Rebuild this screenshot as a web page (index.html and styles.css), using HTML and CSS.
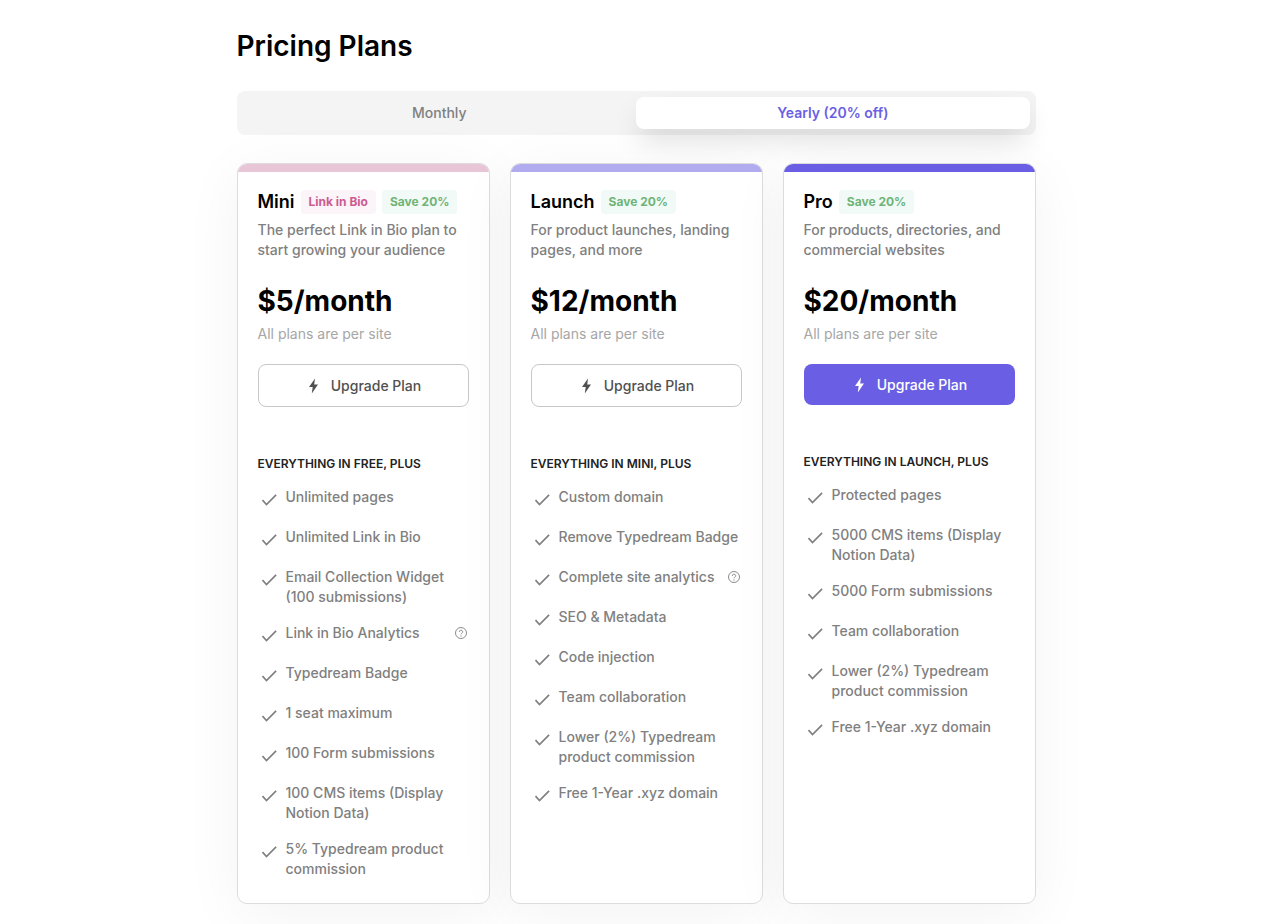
FILE: index.html
```html
<!DOCTYPE html>
<html lang="en">
<head>
  <meta charset="UTF-8" />
  <meta name="viewport" content="width=device-width, initial-scale=1.0" />
  <title>Pricing Plans</title>
  <link rel="stylesheet" href="styles.css">
</head>
<body>

  <!-- shared icons -->
  <svg class="sprite" aria-hidden="true">
    <symbol id="check" viewBox="0 0 24 24">
      <path d="M4.5 13.2l4 4.3L18.100 7.800" fill="none" stroke="currentColor" stroke-width="1.7" />
    </symbol>
    <symbol id="bolt" viewBox="0 0 16 16">
      <path d="M10 0.400L4 9h3.700l-0.900 6.600L13 6.600H9.200z" fill="currentColor" />
    </symbol>
    <symbol id="help" viewBox="0 0 14 14">
      <circle cx="7" cy="7" r="5.5" fill="none" stroke="currentColor" />
      <path d="M5.3 5.9a1.7 1.6 0 1 1 2.5 1.3c-.6.3-.8.5-.8 1.1" fill="none" stroke="currentColor" />
      <circle cx="7" cy="9.9" r=".6" fill="currentColor" />
    </symbol>
  </svg>

  <main class="container">
    <h1 class="title">Pricing Plans</h1>

    <div class="toggle">
      <button class="toggle-btn" type="button">Monthly</button>
      <button class="toggle-btn active" type="button">Yearly (20% off)</button>
    </div>

    <div class="plans">

      <section class="card mini">
        <div class="plan-head">
          <h2 class="plan-name">Mini</h2>
          <span class="badge pink">Link in Bio</span>
          <span class="badge green">Save 20%</span>
        </div>
        <p class="desc">The perfect Link in Bio plan to start growing your audience</p>
        <div class="price">$5/month</div>
        <p class="note">All plans are per site</p>
        <button class="upgrade" type="button"><svg class="bolt"><use href="#bolt" /></svg>Upgrade Plan</button>
        <h3 class="plus">EVERYTHING IN FREE, PLUS</h3>
        <ul class="features">
          <li><svg class="check"><use href="#check" /></svg><span>Unlimited pages</span></li>
          <li><svg class="check"><use href="#check" /></svg><span>Unlimited Link in Bio</span></li>
          <li><svg class="check"><use href="#check" /></svg><span>Email Collection Widget (100 submissions)</span></li>
          <li><svg class="check"><use href="#check" /></svg><span>Link in Bio Analytics</span><button class="help" type="button" aria-label="About Link in Bio Analytics"><svg><use href="#help" /></svg></button></li>
          <li><svg class="check"><use href="#check" /></svg><span>Typedream Badge</span></li>
          <li><svg class="check"><use href="#check" /></svg><span>1 seat maximum</span></li>
          <li><svg class="check"><use href="#check" /></svg><span>100 Form submissions</span></li>
          <li><svg class="check"><use href="#check" /></svg><span>100 CMS items (Display Notion Data)</span></li>
          <li><svg class="check"><use href="#check" /></svg><span>5% Typedream product commission</span></li>
        </ul>
      </section>

      <section class="card launch">
        <div class="plan-head">
          <h2 class="plan-name">Launch</h2>
          <span class="badge green">Save 20%</span>
        </div>
        <p class="desc">For product launches, landing pages, and more</p>
        <div class="price">$12/month</div>
        <p class="note">All plans are per site</p>
        <button class="upgrade" type="button"><svg class="bolt"><use href="#bolt" /></svg>Upgrade Plan</button>
        <h3 class="plus">EVERYTHING IN MINI, PLUS</h3>
        <ul class="features">
          <li><svg class="check"><use href="#check" /></svg><span>Custom domain</span></li>
          <li><svg class="check"><use href="#check" /></svg><span>Remove Typedream Badge</span></li>
          <li><svg class="check"><use href="#check" /></svg><span>Complete site analytics</span><button class="help" type="button" aria-label="About site analytics"><svg><use href="#help" /></svg></button></li>
          <li><svg class="check"><use href="#check" /></svg><span>SEO &amp; Metadata</span></li>
          <li><svg class="check"><use href="#check" /></svg><span>Code injection</span></li>
          <li><svg class="check"><use href="#check" /></svg><span>Team collaboration</span></li>
          <li><svg class="check"><use href="#check" /></svg><span>Lower (2%) Typedream product commission</span></li>
          <li><svg class="check"><use href="#check" /></svg><span>Free 1-Year .xyz domain</span></li>
        </ul>
      </section>

      <section class="card pro">
        <div class="plan-head">
          <h2 class="plan-name">Pro</h2>
          <span class="badge green">Save 20%</span>
        </div>
        <p class="desc">For products, directories, and commercial websites</p>
        <div class="price">$20/month</div>
        <p class="note">All plans are per site</p>
        <button class="upgrade primary" type="button"><svg class="bolt"><use href="#bolt" /></svg>Upgrade Plan</button>
        <h3 class="plus">EVERYTHING IN LAUNCH, PLUS</h3>
        <ul class="features">
          <li><svg class="check"><use href="#check" /></svg><span>Protected pages</span></li>
          <li><svg class="check"><use href="#check" /></svg><span>5000 CMS items (Display Notion Data)</span></li>
          <li><svg class="check"><use href="#check" /></svg><span>5000 Form submissions</span></li>
          <li><svg class="check"><use href="#check" /></svg><span>Team collaboration</span></li>
          <li><svg class="check"><use href="#check" /></svg><span>Lower (2%) Typedream product commission</span></li>
          <li><svg class="check"><use href="#check" /></svg><span>Free 1-Year .xyz domain</span></li>
        </ul>
      </section>

    </div>
  </main>

</body>
</html>
```
FILE: styles.css
```css
* {
  box-sizing: border-box;
}

body {
  margin: 0;
  font-family: Inter, "Liberation Sans", sans-serif;
  font-size: 14px;
  line-height: 20px;
  background: #fff;
  color: #000;
}

h1, h2, h3, p, ul {
  margin: 0;
  padding: 0;
}

button {
  font: inherit;
  cursor: pointer;
}

.sprite {
  position: absolute;
  width: 0;
  height: 0;
}

.container {
  max-width: 799px;
  margin: 0 auto;
  padding: 28px 0 20px;
}

.title {
  font-size: 28px;
  line-height: 36px;
  font-weight: 600;
}

/* billing toggle */
.toggle {
  display: flex;
  margin-top: 27px;
  padding: 6px;
  border-radius: 8px;
  background: #f4f4f4;
}

.toggle-btn {
  flex: 1;
  height: 32px;
  padding: 0;
  border: none;
  border-radius: 8px;
  background: none;
  color: #808080;
  font-weight: 500;
}

.toggle-btn.active {
  background: #fff;
  color: #6a5fe4;
  font-weight: 600;
  box-shadow: 0 14px 28px -4px rgba(0, 0, 0, 0.14);
}

/* plan cards */
.plans {
  display: grid;
  grid-template-columns: repeat(3, 1fr);
  gap: 20px;
  margin-top: 28px;
}

.card {
  position: relative;
  overflow: hidden;
  padding: 26px 20px 24px;
  border: 1px solid #dcdcdc;
  border-radius: 10px;
  background: #fff;
  box-shadow: 0 10px 60px rgba(0, 0, 0, 0.05);
}

/* coloured strip along the top */
.card::before {
  content: "";
  position: absolute;
  top: 0;
  left: 0;
  right: 0;
  height: 8px;
}

.mini::before { background: #e9c5d8; }
.launch::before { background: #b1acef; }
.pro::before { background: #6a5fe4; }

.plan-head {
  display: flex;
  align-items: center;
  gap: 6px;
  height: 24px;
}

.plan-name {
  font-size: 18px;
  line-height: 24px;
  font-weight: 600;
}

.badge {
  padding: 0 8px;
  border-radius: 4px;
  font-size: 12px;
  line-height: 24px;
  font-weight: 700;
  white-space: nowrap;
}

.badge.pink {
  background: #fbf4f8;
  color: #cd5c92;
}

.badge.green {
  background: #f1faf7;
  color: #6fb476;
}

.desc {
  margin-top: 6px;
  color: #808080;
  font-weight: 500;
}

.price {
  margin-top: 24px;
  font-size: 28px;
  line-height: 34px;
  font-weight: 700;
}

.note {
  margin-top: 6px;
  color: #a6a6a6;
}

.upgrade {
  display: flex;
  align-items: center;
  justify-content: center;
  gap: 10px;
  width: 100%;
  margin-top: 20px;
  padding: 10px 0;
  line-height: 21px;
  border: 1px solid #c8c8c8;
  border-radius: 8px;
  background: #fff;
  color: #505050;
  font-weight: 500;
}

.upgrade.primary {
  border: none;
  background: #6a5fe4;
  color: #fff;
}

.bolt {
  width: 16px;
  height: 16px;
}

.plus {
  margin-top: 48px;
  font-size: 12px;
  line-height: 18px;
  font-weight: 600;
  color: #222;
}

.features {
  display: flex;
  flex-direction: column;
  gap: 16px;
  margin-top: 14px;
  list-style: none;
  color: #808080;
  font-weight: 500;
}

.features li {
  display: flex;
  align-items: flex-start;
  gap: 4px;
}

.check {
  flex: none;
  width: 24px;
  height: 24px;
}

.help {
  flex: none;
  display: flex;
  margin-left: auto;
  padding: 3px 1px 3px 0;
  border: none;
  background: none;
  color: #8c8c8c;
}

.help svg {
  width: 14px;
  height: 14px;
}

@media (max-width: 760px) {
  .container {
    padding: 28px 20px;
  }

  .plans {
    grid-template-columns: 1fr;
  }
}
```
